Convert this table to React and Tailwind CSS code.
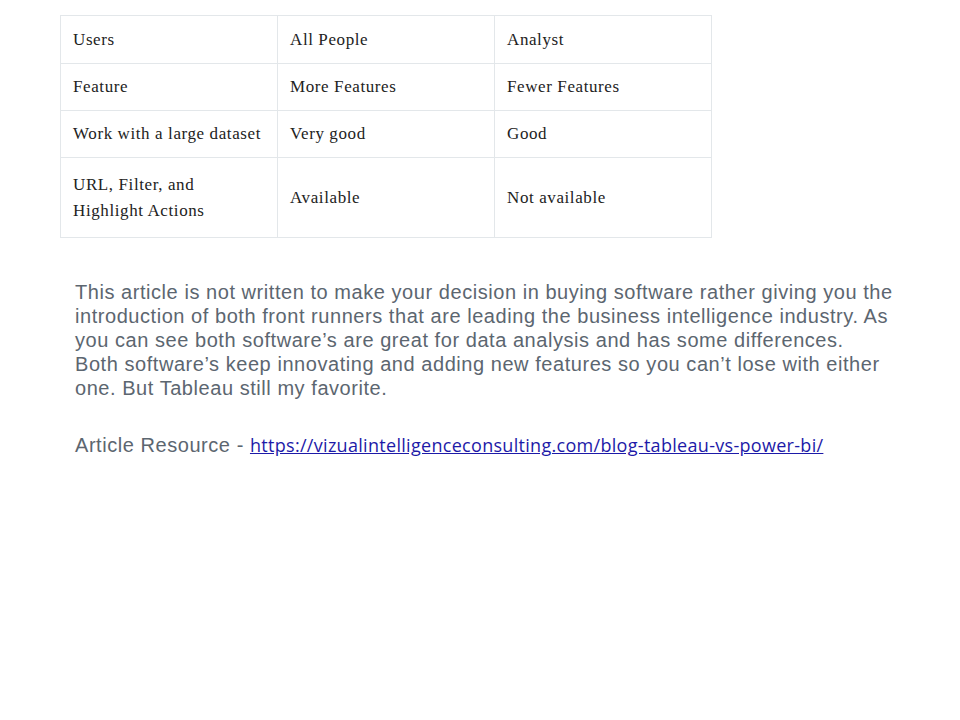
import React from 'react';

const rows = [
  ['Users', 'All People', 'Analyst'],
  ['Feature', 'More Features', 'Fewer Features'],
  ['Work with a large dataset', 'Very good', 'Good'],
];

const App = () => {
  return (
    <div className="w-[960px] h-[720px] bg-white relative overflow-hidden">
      <div className="pt-[15px] pl-[60px]">
        <table
          className="w-[651px] table-fixed border-collapse border border-[#ececec] text-[17px] tracking-[0.6px] text-[#222]"
          style={{ fontFamily: '"Liberation Serif", serif' }}
        >
          <tbody>
            {rows.map((r, i) => (
              <tr key={i} className={i === 0 ? 'h-[48px]' : 'h-[47px]'}>
                {r.map((c, j) => (
                  <td key={j} className="w-[217px] border border-[#e3e7ea] pl-[12px] pr-0 whitespace-nowrap align-middle">
                    {c}
                  </td>
                ))}
              </tr>
            ))}
            <tr className="h-[80px]">
              <td className="w-[217px] border border-[#e3e7ea] pl-[12px] leading-[26px] align-middle">
                URL, Filter, and<br />Highlight Actions
              </td>
              <td className="w-[217px] border border-[#e3e7ea] pl-[12px] align-middle">Available</td>
              <td className="w-[217px] border border-[#e3e7ea] pl-[12px] align-middle">Not available</td>
            </tr>
          </tbody>
        </table>
      </div>

      <div
        className="mt-[42px] ml-[75px] w-[880px] text-[20px] leading-[24px] tracking-[0.55px] text-[#5c6670] whitespace-nowrap"
        style={{ fontFamily: '"Liberation Sans", Arial, sans-serif' }}
      >
        <p>
          This article is not written to make your decision in buying software rather giving you the<br />
          introduction of both front runners that are leading the business intelligence industry. As<br />
          you can see both software’s are great for data analysis and has some differences.<br />
          Both software’s keep innovating and adding new features so you can’t lose with either<br />
          one. But Tableau still my favorite.
        </p>
        <p className="mt-[33px]">
          Article Resource -{' '}
          <a
            href="#"
            className="text-[#1d1aa8] underline text-[18px] tracking-[0.3px]"
            style={{ fontFamily: '"Open Sans", sans-serif' }}
          >
            https://vizualintelligenceconsulting.com/blog-tableau-vs-power-bi/
          </a>
        </p>
      </div>
    </div>
  );
};

export default App;
